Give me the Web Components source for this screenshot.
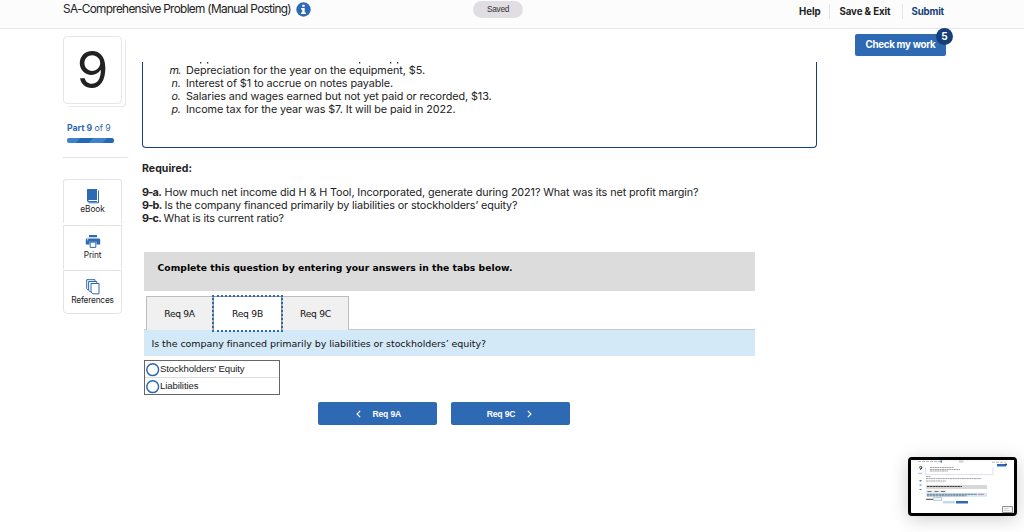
<!DOCTYPE html>
<html lang="en">
<head>
<meta charset="utf-8">
<title>SA-Comprehensive Problem</title>
<style>
  html, body { margin: 0; height: 532px; overflow: hidden; background: #fff; }
  body { font-family: Inter, "Open Sans", sans-serif; font-size: 11px; color: #222; }
  main { display: grid; grid-template-columns: 65px 699px 1fr; column-gap: 14px; padding-left: 63px; }
</style>
</head>
<body>
<top-bar></top-bar>
<main>
  <side-bar></side-bar>
  <question-area></question-area>
  <check-work></check-work>
</main>
<page-preview></page-preview>

<script>
// every component goes through this, styles + markup in an open root
function define(name, html) {
  const template = document.createElement('template');
  template.innerHTML = html;
  customElements.define(name, class extends HTMLElement {
    constructor() {
      super();
      this.attachShadow({ mode: 'open' });
      this.shadowRoot.appendChild(template.content.cloneNode(true));
    }
  });
}

define('top-bar', `
  <style>
    :host { display: flex; height: 29px; margin-bottom: -1px; box-sizing: border-box; border-bottom: 1px solid #e8e8ea; background: #fcfcfc; padding-left: 63px; }
    .title { display: flex; width: 410px; gap: 4.5px; font-size: 11.8px; line-height: 18px; color: #222; }
    .title svg { margin-top: 2px; }
    .saved { width: 50px; height: 17px; margin-top: 1px; border-radius: 9px; background: #e0dee2; text-align: center; font: 8.3px/16px "Liberation Sans", sans-serif; color: #333; }
    nav { display: flex; margin-left: 276px; margin-top: 4px; height: 15px; font-size: 9.7px; line-height: 15px; font-weight: 700; }
    nav > * { box-sizing: border-box; }
    .help { width: 31px; border-right: 1px solid #e4e4e4; }
    .exit { width: 73px; padding-left: 9.5px; border-right: 1px solid #e4e4e4; }
    .submit { padding-left: 8.5px; color: #163f7a; }
  </style>
  <div class="title">
    <fit-text w="228">SA-Comprehensive Problem (Manual Posting)</fit-text>
    <svg width="15" height="15" viewBox="0 0 15 15"><circle cx="7.5" cy="7.5" r="7.2" fill="#2e69b3"/><path d="M6.2 2.7h2.5v2.1H6.2zM5.1 6.1h3.6v4.4h1.2v1.6H5v-1.6h1.2V7.6H5.1z" fill="#fff"/></svg>
  </div>
  <div class="saved"><fit-text w="22">Saved</fit-text></div>
  <nav>
    <div class="help"><fit-text w="21.5">Help</fit-text></div>
    <div class="exit"><fit-text w="51">Save &amp; Exit</fit-text></div>
    <div class="submit"><fit-text w="32.5">Submit</fit-text></div>
  </nav>
`);

define('tool-button', `
  <style>
    :host { display: flex; flex-direction: column; align-items: center; box-sizing: border-box; width: 59px; height: 44px; border: 1px solid #e4e4e4; border-bottom: 0; color: #222; font-size: 8.3px; line-height: 12px; }
    ::slotted(svg) { margin: 8px 0 -1px; flex: none; }
  </style>
  <slot></slot>
`);

define('side-bar', `
  <style>
    :host { display: block; padding-top: 8px; }
    .number { width: 59px; height: 68px; box-sizing: border-box; border: 1px solid #e6e6e6; border-radius: 4px; background: #fff; box-shadow: 3px 2px 0 #fff, 4px 3px 0 #e8e8e8; text-align: center; font-size: 51px; line-height: 66px; }
    .part { display: flex; gap: 2px; margin: 17px 0 0 4px; font-size: 8.7px; line-height: 15px; color: #2e69b3; }
    .progress { width: 47px; height: 5px; margin: 2px 0 0 4px; border-radius: 2px; background: repeating-linear-gradient(135deg, #3c83cc 0 9.5px, #2569b4 9.5px 19px); }
    hr { width: 65px; height: 1px; margin: 14px 0 21px; border: 0; background: #e2e2e2; }
    .tools { display: flex; flex-direction: column; gap: 1.5px; width: 59px; }
    tool-button:first-child { border-radius: 3px 3px 0 0; }
    tool-button:last-child { border-bottom: 1px solid #e4e4e4; border-radius: 0 0 4px 4px; }
  </style>
  <div class="number">9</div>
  <div class="part"><fit-text w="17.5"><b>Part</b></fit-text><fit-text w="24"><b>9</b> of 9</fit-text></div>
  <div class="progress"></div>
  <hr>
  <div class="tools">
    <tool-button>
      <svg width="14" height="16" viewBox="0 0 14 16"><path d="M1.6 1H11v11H2.5v1H11v1H2.3Q1 14 1 12.5V1.6Q1 1 1.6 1z" fill="#2e69b3"/><path d="M12.5 2.5v12.3H2.5" fill="none" stroke="#2e69b3"/></svg>
      <fit-text w="24.5">eBook</fit-text>
    </tool-button>
    <tool-button>
      <svg width="16" height="16" viewBox="0 0 16 16"><path d="M4 1h8v2.3H4zM2 4.5h12q1.2 0 1.2 1.2v4.8h-3.7V7.7h-7v2.800H.8V5.7Q.8 4.5 2 4.5z" fill="#2e69b3"/><path d="M5.2 8.2h5.6v5.2H5.2z" fill="#fff" stroke="#2e69b3"/><path d="M2 5.8h1.2" stroke="#fff"/></svg>
      <fit-text w="17.5">Print</fit-text>
    </tool-button>
    <tool-button>
      <svg width="14" height="16" viewBox="0 0 14 16"><g fill="#fff" stroke="#2e69b3" stroke-linejoin="round"><path d="M.7.7H9V11H2.2L.7 9.4z"/><path d="M2.6 2.5h8.2v10.2H4.2l-1.6-1.5z"/><path d="M5 4.5h8v10.3H7L5 13z"/></g></svg>
      <fit-text w="42.5">References</fit-text>
    </tool-button>
  </div>
`);

define('list-row', `
  <style>
    :host { display: flex; height: 13px; line-height: 13px; }
    .mark { width: 37.5px; margin-right: 5.5px; text-align: right; font-style: italic; }
  </style>
  <span class="mark"><slot name="mark"></slot></span><slot></slot>
`);

define('passage-box', `
  <style>
    :host { display: block; box-sizing: border-box; width: 675px; height: 86px; border: 1px solid #163f7a; border-top: 0; border-radius: 0 0 4px 4px; font-size: 10.8px; }
    svg { display: block; }
  </style>
  <!-- tails of the line scrolled out above -->
  <svg width="300" height="2"><path d="M57 .7h1.3M64 .7h1.3M216 .7h1.3M247 .7h1.3M254 .7h1.3" stroke="#333" stroke-width="1.4"/></svg>
  <list-row><fit-text w="11" slot="mark">m.</fit-text><fit-text w="239">Depreciation for the year on the equipment, $5.</fit-text></list-row>
  <list-row><fit-text w="9" slot="mark">n.</fit-text><fit-text w="207">Interest of $1 to accrue on notes payable.</fit-text></list-row>
  <list-row><fit-text w="9" slot="mark">o.</fit-text><fit-text w="305.5">Salaries and wages earned but not yet paid or recorded, $13.</fit-text></list-row>
  <list-row><fit-text w="9" slot="mark">p.</fit-text><fit-text w="269.5">Income tax for the year was $7. It will be paid in 2022.</fit-text></list-row>
`);

define('req-tabs', `
  <style>
    :host { display: flex; height: 34px; padding-left: 2px; font-size: 9.2px; color: #111; }
    div { box-sizing: border-box; width: 67px; height: 34px; border: 1px solid #bdbdbd; border-bottom: 0; background: #f0f0f0; text-align: center; line-height: 34px; }
    .on { width: 69px; height: 35px; border: 1px solid #999; border-bottom: 0; background: #fff; outline: 2px dotted #2e69b3; outline-offset: -1px; position: relative; }
  </style>
  <div><fit-text w="30.5">Req 9A</fit-text></div>
  <div class="on"><fit-text w="31">Req 9B</fit-text></div>
  <div><fit-text w="31">Req 9C</fit-text></div>
`);

define('radio-option', `
  <style>
    :host { display: flex; align-items: center; height: 16px; padding-left: 1px; font: 9.6px/16px "Liberation Sans", Arial, sans-serif; color: #222; }
    svg { flex: none; overflow: visible; margin-right: 1px; }
  </style>
  <svg width="13" height="13"><circle cx="6.7" cy="6.7" r="5.9" fill="#fff" stroke="#2e69b3" stroke-width="1.5"/></svg><slot></slot>
`);

define('nav-button', `
  <style>
    :host { display: flex; align-items: center; justify-content: center; gap: 12px; box-sizing: border-box; width: 118.5px; height: 23px; border-radius: 2px; background: #2e69b3; color: #fff; font: bold 8.6px/24px "Liberation Sans", Arial, sans-serif; }
    :host([prev]) { padding-left: 2px; }
    :host([next]) { padding-right: 1.5px; }
  </style>
  <slot></slot>
`);

define('question-area', `
  <style>
    :host { display: block; padding-top: 34px; }
    .required { margin-top: 14px; font-size: 10.5px; font-weight: 700; line-height: 13px; }
    .asks { margin-top: 11px; font-size: 10.8px; line-height: 13px; }
    .asks div { display: flex; height: 13px; }
    .asks b { width: 22.5px; }
    .sheet { width: 611px; margin: 27px 0 0 2px; font-family: "DejaVu Sans", Verdana, sans-serif; }
    .banner { height: 39px; box-sizing: border-box; padding: 8px 0 0 13.5px; background: #dcdcdc; font-size: 9.2px; font-weight: 700; line-height: 15px; color: #000; margin-bottom: 5px; }
    .prompt { height: 27px; box-sizing: border-box; margin-top: -1px; border-top: 1px solid #c3ccd2; padding-left: 7.5px; background: #d4e9f8; font-size: 9.5px; line-height: 27px; color: #111; }
    .choices { box-sizing: border-box; width: 136px; height: 35px; margin-top: 4px; border: 1px solid #666; }
    .choices radio-option:first-child { border-bottom: 1px solid #ddd; }
    .buttons { display: flex; gap: 14.5px; margin: 7px 0 0 174px; }
  </style>
  <passage-box></passage-box>
  <div class="required"><fit-text w="50">Required:</fit-text></div>
  <div class="asks">
    <div><b><fit-text w="19">9-a.</fit-text></b><fit-text w="534">How much net income did H &amp; H Tool, Incorporated, generate during 2021? What was its net profit margin?</fit-text></div>
    <div><b><fit-text w="19.5">9-b.</fit-text></b><fit-text w="353">Is the company financed primarily by liabilities or stockholders’ equity?</fit-text></div>
    <div><b style="width:21.5px"><fit-text w="19">9-c.</fit-text></b><fit-text w="120.5">What is its current ratio?</fit-text></div>
  </div>
  <div class="sheet">
    <div class="banner"><fit-text w="355">Complete this question by entering your answers in the tabs below.</fit-text></div>
    <req-tabs></req-tabs>
    <div class="prompt"><fit-text w="334.5">Is the company financed primarily by liabilities or stockholders’ equity?</fit-text></div>
    <div class="choices">
      <radio-option><fit-text w="84.5">Stockholders' Equity</fit-text></radio-option>
      <radio-option><fit-text w="38.5">Liabilities</fit-text></radio-option>
    </div>
    <div class="buttons">
      <nav-button prev><svg width="5" height="8"><path d="M4.2.8L1 4l3.2 3.2" fill="none" stroke="#fff" stroke-width="1.1"/></svg><fit-text w="28.5">Req 9A</fit-text></nav-button>
      <nav-button next><fit-text w="28.5">Req 9C</fit-text><svg width="5" height="8"><path d="M.8.8L4 4 .8 7.2" fill="none" stroke="#fff" stroke-width="1.1"/></svg></nav-button>
    </div>
  </div>
`);

define('check-work', `
  <style>
    :host { display: block; padding-top: 6px; }
    .btn { position: relative; box-sizing: border-box; width: 91px; height: 22px; padding-left: 10.5px; border-radius: 2px; background: #2e69b3; color: #fff; font-size: 9.8px; font-weight: 700; line-height: 22px; }
    .count { position: absolute; left: 81px; top: -6px; width: 17px; height: 17px; border-radius: 50%; background: #163f7a; font-size: 10px; line-height: 17px; text-align: center; }
  </style>
  <div class="btn"><fit-text w="70">Check my work</fit-text><span class="count">5</span></div>
`);

define('page-preview', `
  <style>
    :host { display: block; position: absolute; left: 908px; top: 457px; box-sizing: border-box; width: 109px; height: 59px; border: 3px solid #000; border-radius: 4px; background: #fff; box-shadow: 0 3px 18px rgba(0, 0, 0, .2); }
    svg { display: block; }
  </style>
  <svg width="103" height="53" viewBox="911 460 103 53">
    <path d="M911 460h104v2h-104z" fill="#fafafa"/>
    <g fill="none" stroke="#777" stroke-width=".8">
      <path d="M918 461.5h24M992 462.3h14" stroke-dasharray="3 1" opacity=".6"/>
      <path d="M930 467.5h24M930 469.5h30M930 471h18M926 478.6h55M926 481h20M926 476.5h5" stroke-dasharray="2 .4" opacity=".85"/>
    </g>
    <path d="M925.5 467v7.5h67.5V467" fill="none" stroke="#b5c7df" stroke-width=".5"/>
    <path d="M959 460.5h4.5v2H959z" fill="#ccc"/>
    <path d="M940.5 460.5h1.5v2h-1.5zM997 464h9v2.5h-9z" fill="#2e69b3"/>
    <circle cx="1006" cy="464.5" r="1" fill="#163f7a"/>
    <rect x="918" y="464.5" width="5.5" height="8" fill="#fff" stroke="#eee" stroke-width=".5"/>
    <circle cx="920.7" cy="467.4" r="1.1" fill="none" stroke="#222" stroke-width=".8"/>
    <path d="M921.8 467.4q0 2-1.9 2.4" fill="none" stroke="#222" stroke-width=".8"/>
    <path d="M918 473.5h4" stroke="#8cadda" stroke-width=".7"/>
    <path d="M919.5 480h2v1.5h-2zM919.5 484.5h2v1h-2zM919.5 489h2v1h-2z" fill="#4a7ec4"/>
    <path d="M926 485h61v4h-61z" fill="#d8d8d8"/>
    <path d="M927 486.5h35" stroke="#444" stroke-width="1" stroke-dasharray="2.5 .3"/>
    <path d="M926 489.7h20v3.3h-20z" fill="#eee"/>
    <path d="M927.5 491.5h4M934.5 491.5h4M941 491.5h4" stroke="#555" stroke-width=".8"/>
    <path d="M926 493h61v3.7h-61z" fill="#cfe7f8"/>
    <path d="M927 494.3h50M927 495.8h37" stroke="#3c5368" stroke-width=".7" stroke-dasharray="2.5 .4"/>
    <path d="M978 494.3h6M964 495.8h3" stroke="#c44" stroke-width=".6"/>
    <path d="M926 499.3h7" stroke="#444"/>
    <path d="M933.5 497.5h8v3h-8z" fill="#eef6fc" stroke="#8aa" stroke-width=".5"/>
    <path d="M943 501h12v2.5h-12z" fill="#c8d8ec"/>
    <path d="M956 501h12v2.5h-12z" fill="#2e69b3"/>
    <path d="M1002.5 506.5h10v6h-10z" fill="#f4f4f4" stroke="#777" stroke-width=".8"/>
    <path d="M1004 508.5h4M1004 510.5h5" stroke="#bbb" stroke-width=".6"/>
  </svg>
`);

// stretches or tightens its letters until the line is w pixels wide
class FitText extends HTMLElement {
  constructor() {
    super();
    this.attachShadow({ mode: 'open' });
    this.shadowRoot.innerHTML = `<style>:host { display: inline-block; flex: none; white-space: pre; }</style><slot></slot>`;
  }
  connectedCallback() {
    const gap = Number(this.getAttribute('w')) - this.getBoundingClientRect().width;
    this.style.letterSpacing = gap / this.textContent.length + 'px';
  }
}
customElements.define('fit-text', FitText);
</script>
</body>
</html>
